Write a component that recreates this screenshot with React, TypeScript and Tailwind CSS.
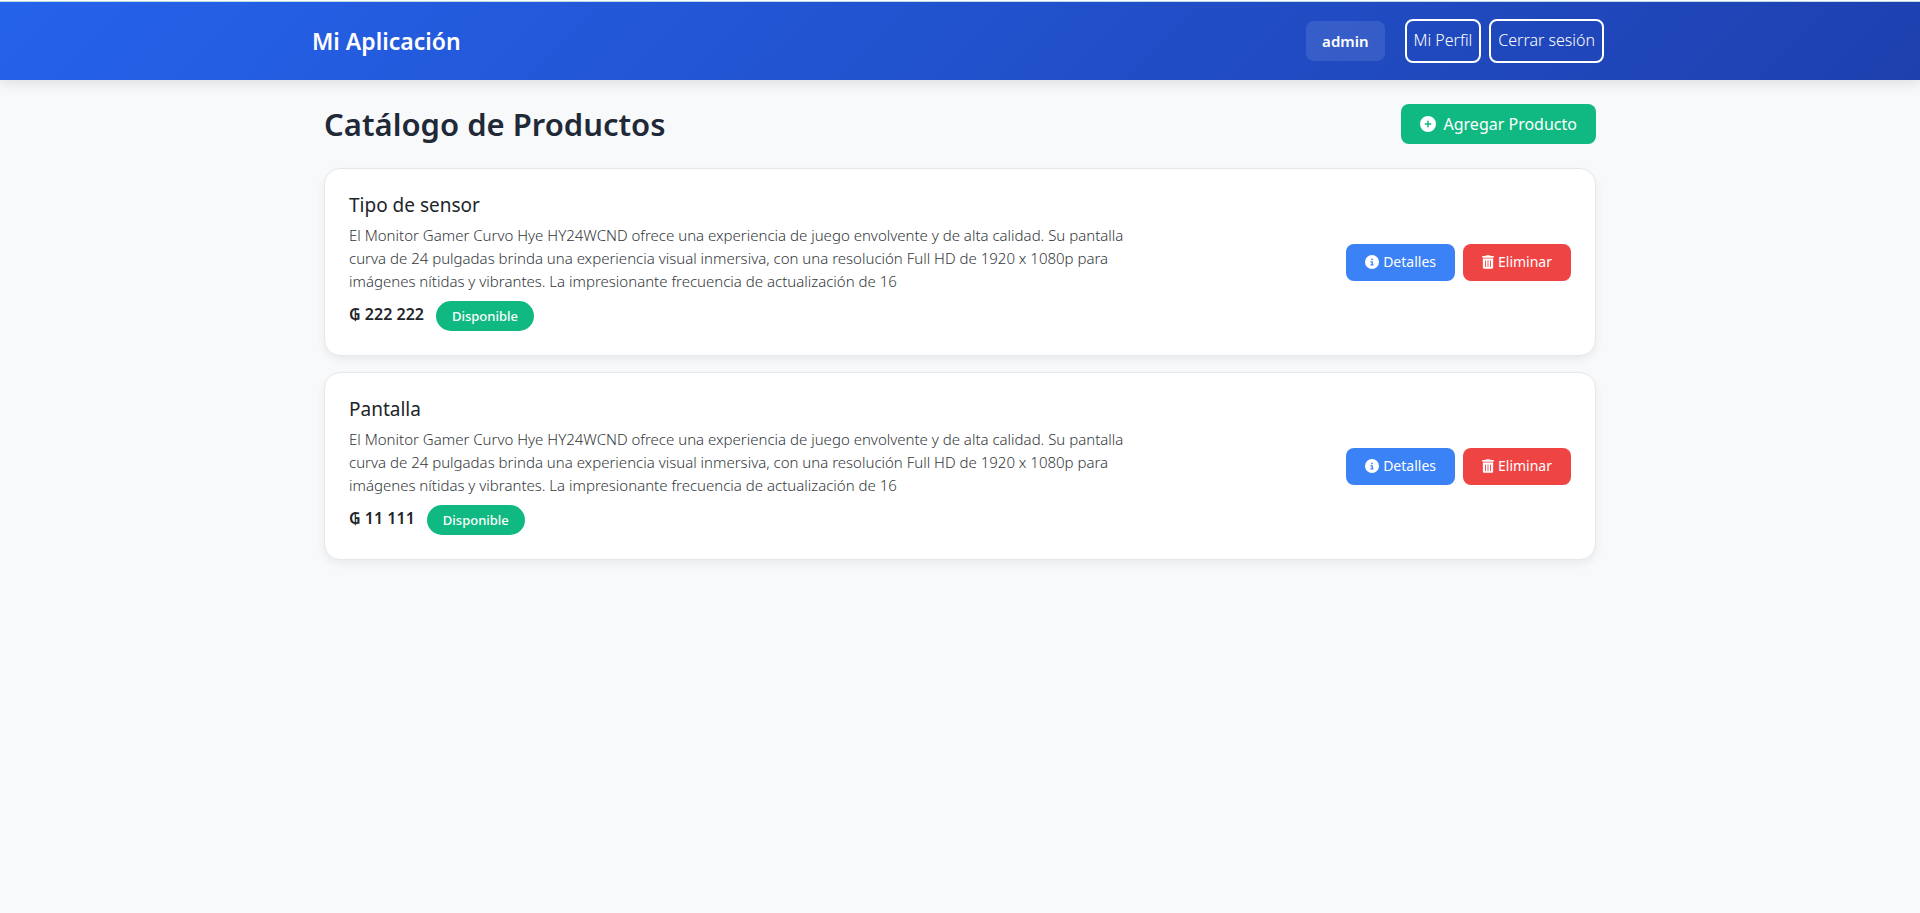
import { FaCircleInfo, FaCirclePlus, FaTrashCan } from 'react-icons/fa6'

interface Product {
  id: number
  name: string
  description: string
  price: string
  status: string
}

const DESCRIPTION =
  'El Monitor Gamer Curvo Hye HY24WCND ofrece una experiencia de juego envolvente y de alta calidad. Su pantalla curva de 24 pulgadas brinda una experiencia visual inmersiva, con una resolución Full HD de 1920 x 1080p para imágenes nítidas y vibrantes. La impresionante frecuencia de actualización de 16'

const products: Product[] = [
  { id: 1, name: 'Tipo de sensor', description: DESCRIPTION, price: '₲ 222 222', status: 'Disponible' },
  { id: 2, name: 'Pantalla', description: DESCRIPTION, price: '₲ 11 111', status: 'Disponible' },
]

function Header() {
  return (
    <header className="relative border-t border-white shadow-[0_4px_12px_rgba(0,0,0,0.1)]">
      <div className="border-t border-[#b9dbe6] bg-[linear-gradient(135deg,#2563eb,#1e40af)]">
        <nav className="mx-auto flex max-w-[1320px] items-center justify-between px-3 py-[17px] text-white">
          <a href="#" className="text-[23px] leading-8 font-semibold">
            Mi Aplicación
          </a>
          <div className="flex items-center gap-2 pr-1">
            <span className="mr-3 rounded-lg bg-white/10 px-4 py-2 text-[15px] leading-6 font-semibold">admin</span>
            <button type="button" className="h-11 rounded-lg border-2 border-white px-[7px] pb-0.5 font-light">
              Mi Perfil
            </button>
            <button type="button" className="h-11 rounded-lg border-2 border-white px-[7px] pb-0.5 font-light">
              Cerrar sesión
            </button>
          </div>
        </nav>
      </div>
    </header>
  )
}

function ProductCard({ product }: { product: Product }) {
  return (
    <article className="flex items-center justify-between gap-6 rounded-2xl border border-[#e5e7eb] bg-white p-6 shadow-[0_4px_8px_rgba(0,0,0,0.06)]">
      <div className="max-w-[800px]">
        <h2 className="mb-[7px] text-[19px] leading-6 text-[#212529]">{product.name}</h2>
        <p className="text-[15px] leading-[23px] font-light text-[#33373b]">{product.description}</p>
        <div className="mt-2 flex items-start gap-3">
          <span className="leading-[27px] font-semibold text-[#212529]">{product.price}</span>
          <span className="rounded-full bg-[#10b981] px-4 text-[13px] leading-[30px] font-medium text-white">
            {product.status}
          </span>
        </div>
      </div>
      <div className="flex gap-2 text-sm text-white">
        <button type="button" className="flex h-[37px] items-center gap-1 rounded-lg bg-[#3b82f6] px-[19px]">
          <FaCircleInfo className="size-3.5" />
          Detalles
        </button>
        <button type="button" className="flex h-[37px] items-center gap-1 rounded-lg bg-[#ef4444] px-[19px]">
          <FaTrashCan className="h-3.5 w-3" />
          Eliminar
        </button>
      </div>
    </article>
  )
}

export default function App() {
  return (
    <div className="min-h-screen bg-[#f8f9fb] font-['Noto_Sans',sans-serif]">
      <Header />
      <main className="mx-auto max-w-[1320px] p-6">
        <div className="mb-6 flex items-center justify-between">
          <h1 className="text-[31px] leading-[38px] font-semibold text-[#1f2937]">Catálogo de Productos</h1>
          <button type="button" className="flex h-10 items-center gap-2 rounded-lg bg-[#10b981] px-[19px] text-white">
            <FaCirclePlus className="size-4" />
            Agregar Producto
          </button>
        </div>
        <div className="flex flex-col gap-4">
          {products.map((product) => (
            <ProductCard key={product.id} product={product} />
          ))}
        </div>
      </main>
    </div>
  )
}
